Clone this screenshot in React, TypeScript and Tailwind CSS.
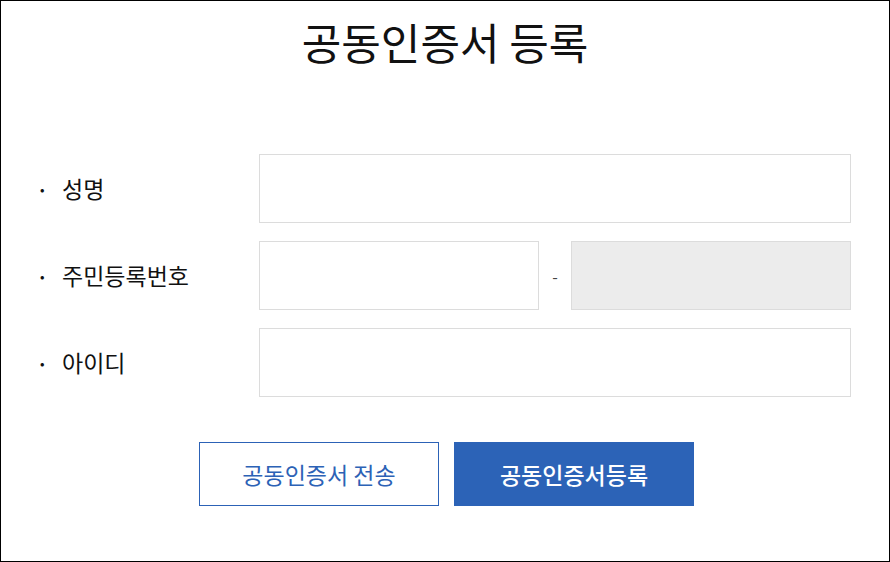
import React from "react";

const font = { fontFamily: '"Noto Sans CJK KR", "Noto Sans", sans-serif' };

function Row({ label, children }: { label: string; children: React.ReactNode }) {
  return (
    <div className="flex h-[69px] items-center">
      <div className="flex w-[220px] items-center text-[23px] text-[#111]">
        <span className="-ml-[3px] w-[26px] text-[22px] font-medium leading-none">·</span>
        <span>{label}</span>
      </div>
      <div className="flex flex-1 items-center self-stretch">{children}</div>
    </div>
  );
}

export default function App() {
  return (
    <div
      className="box-border flex h-[562px] w-[890px] flex-col border border-black bg-white"
      style={font}
    >
      <h1 className="mt-[12px] text-center text-[43px] font-normal leading-[56px] text-[#111]">
        공동인증서 등록
      </h1>
      <div className="mt-[85px] flex flex-col gap-[18px] px-[38px]">
        <Row label="성명">
          <div className="h-full flex-1 border border-[#dcdcdc] bg-white" />
        </Row>
        <Row label="주민등록번호">
          <div className="h-full w-[280px] border border-[#dcdcdc] bg-white" />
          <div className="flex w-[32px] justify-center text-[16px] text-[#444]">-</div>
          <div className="h-full flex-1 border border-[#dcdcdc] bg-[#ececec]" />
        </Row>
        <Row label="아이디">
          <div className="h-full flex-1 border border-[#dcdcdc] bg-white" />
        </Row>
      </div>
      <div className="mt-[45px] flex justify-center gap-[15px] pl-[3px]">
        <button className="h-[64px] w-[240px] border border-[#2c62b6] bg-white text-[23px] text-[#2c62b6]">
          공동인증서 전송
        </button>
        <button className="h-[64px] w-[240px] bg-[#2c63b7] text-[23px] font-medium text-white">
          공동인증서등록
        </button>
      </div>
    </div>
  );
}
